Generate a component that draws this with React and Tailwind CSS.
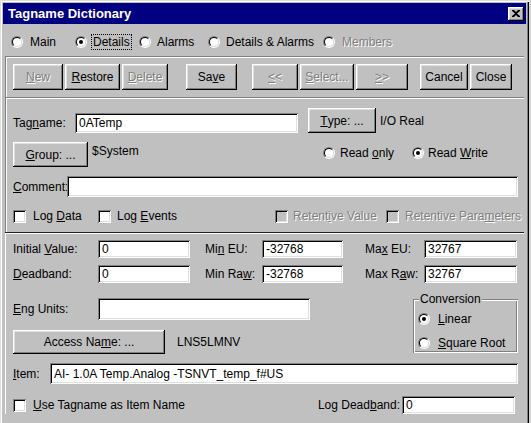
import React from "react";

const raised = "shadow-[inset_-1px_-1px_#000,inset_1px_1px_#fff,inset_-2px_-2px_#808080,inset_2px_2px_#dfdfdf]";
const sunken = "shadow-[inset_1px_1px_#808080,inset_-1px_-1px_#fff,inset_2px_2px_#000,inset_-2px_-2px_#dfdfdf]";
const dim = "text-[#808080] [text-shadow:1px_1px_0_#fff]";

function Button({ children, className = "", disabled }) {
    return (
        <div className={`flex items-center justify-center bg-[#c0c0c0] ${raised} ${disabled ? dim : "text-black"} ${className}`}>
            {children}
        </div>
    );
}

function Field({ children, className = "" }) {
    return (
        <div className={`flex items-center bg-white pl-[4px] ${sunken} ${className}`}>
            {children}
        </div>
    );
}

function Radio({ checked }) {
    return (
        <span className="inline-block w-[12px] h-[12px] shrink-0 rounded-full border border-t-[#808080] border-l-[#808080] border-b-white border-r-white">
            <span className="flex w-full h-full items-center justify-center rounded-full border border-t-black border-l-black border-b-[#dfdfdf] border-r-[#dfdfdf] bg-white">
                {checked && <span className="w-[4px] h-[4px] rounded-full bg-black" />}
            </span>
        </span>
    );
}

function Check({ disabled }) {
    return (
        <span className={`inline-block w-[13px] h-[13px] shrink-0 ${sunken} ${disabled ? "bg-[#c0c0c0]" : "bg-white"}`} />
    );
}

export default function App() {
    return (
        <div className="w-[531px] h-[423px] overflow-hidden bg-[#d4d4d4] font-['Liberation_Sans',Arial,sans-serif] text-[12px] leading-[14px] text-black">
            <div className="w-[529px] h-full bg-[#c0c0c0] pl-[3px] pt-[3px] pr-[3px] shadow-[inset_1px_1px_#dfdfdf,inset_2px_2px_#fff,inset_-1px_0_#000,inset_-2px_0_#808080]">
                {/* title bar */}
                <div className="h-[21px] bg-[#000080] flex items-center pl-[5px] pr-[2px] text-white font-bold text-[13px]">
                    <span>Tagname Dictionary</span>
                    <div className={`ml-auto w-[16px] h-[14px] bg-[#c0c0c0] flex items-center justify-center ${raised}`}>
                        <svg width="8" height="7" viewBox="0 0 8 7">
                            <path d="M0 0h2l2 2 2-2h2v1L5 3.5 8 6v1H6L4 5 2 7H0V6l3-2.5L0 1z" fill="#000" />
                        </svg>
                    </div>
                </div>

                {/* view radios */}
                <div className="h-[32px] flex items-center pl-[8px] pt-[3px]">
                    <div className="w-[64px] flex items-center"><Radio /><span className="ml-[7px]">Main</span></div>
                    <div className="w-[64px] flex items-center">
                        <Radio checked />
                        <span className="ml-[4px] px-[1px] border border-dotted border-black">Details</span>
                    </div>
                    <div className="w-[69px] flex items-center"><Radio /><span className="ml-[6px]">Alarms</span></div>
                    <div className="w-[115px] flex items-center"><Radio /><span className="ml-[6px]">Details &amp; Alarms</span></div>
                    <div className="flex items-center"><Radio /><span className={`ml-[7px] ${dim}`}>Members</span></div>
                </div>

                {/* toolbar */}
                <div className="mx-[2px] h-[41px] pt-[8px] pl-[8px] shadow-[inset_1px_1px_#808080,inset_2px_2px_#fff]">
                    <div className="flex">
                        <Button disabled className="w-[50px] h-[26px]"><u>N</u>ew</Button>
                        <Button className="w-[55px] h-[26px] ml-[2px]"><u>R</u>estore</Button>
                        <Button disabled className="w-[46px] h-[26px] ml-[2px]"><u>D</u>elete</Button>
                        <Button className="w-[51px] h-[26px] ml-[18px]">Sa<u>v</u>e</Button>
                        <Button disabled className="w-[46px] h-[26px] ml-[15px]"><u>&lt;</u>&lt;</Button>
                        <Button disabled className="w-[54px] h-[26px] ml-[2px]"><u>S</u>elect...</Button>
                        <Button disabled className="w-[52px] h-[26px] ml-[2px]"><u>&gt;</u>&gt;</Button>
                        <Button className="w-[48px] h-[26px] ml-[12px]">Cancel</Button>
                        <Button className="w-[42px] h-[26px] ml-[2px]">Close</Button>
                    </div>
                </div>

                {/* tag section */}
                <div className="mx-[2px] h-[135px] pt-[11px] pl-[8px] shadow-[inset_1px_1px_#808080,inset_2px_2px_#fff]">
                    <div className="flex items-end h-[25px]">
                        <span className="w-[62px] mb-[3px]">Tag<u>n</u>ame:</span>
                        <Field className="w-[223px] h-[20px]">0ATemp</Field>
                        <Button className="w-[68px] h-[25px] ml-[10px]"><u>T</u>ype: ...</Button>
                        <span className="ml-[4px] self-center">I/O Real</span>
                    </div>
                    <div className="flex mt-[9px] h-[25px]">
                        <Button className="w-[75px] h-[25px]"><u>G</u>roup: ...</Button>
                        <span className="w-[231px] ml-[4px] mt-[2px]">$System</span>
                        <div className="flex items-center mt-[5px] h-[12px]">
                            <div className="w-[89px] flex items-center"><Radio /><span className="ml-[5px]">Read <u>o</u>nly</span></div>
                            <div className="flex items-center"><Radio checked /><span className="ml-[4px]">Read <u>W</u>rite</span></div>
                        </div>
                    </div>
                    <div className="flex items-center mt-[9px]">
                        <span className="w-[54px]"><u>C</u>omment:</span>
                        <Field className="w-[451px] h-[21px]" />
                    </div>
                    <div className="flex items-center mt-[12px]">
                        <div className="w-[85px] flex items-center"><Check /><span className="ml-[7px]">Log <u>D</u>ata</span></div>
                        <div className="w-[177px] flex items-center"><Check /><span className="ml-[6px]">Log <u>E</u>vents</span></div>
                        <div className="w-[111px] flex items-center"><Check disabled /><span className={`ml-[5px] ${dim}`}>Retent<u>i</u>ve Value</span></div>
                        <div className="flex items-center"><Check disabled /><span className={`ml-[6px] ${dim}`}>Retentive Para<u>m</u>eters</span></div>
                    </div>
                </div>

                {/* separator */}
                <div className="mx-[2px] h-[2px] bg-[#202020] border-b border-white" />

                {/* io section */}
                <div className="mx-[2px] pt-[6px] pl-[8px] shadow-[inset_1px_0_#fff]">
                    <div className="flex items-center h-[18px]">
                        <span className="w-[85px]">Initial <u>V</u>alue:</span>
                        <Field className="w-[92px] h-[18px]">0</Field>
                        <span className="w-[57px] ml-[15px]">Mi<u>n</u> EU:</span>
                        <Field className="w-[81px] h-[18px]">-32768</Field>
                        <span className="w-[59px] ml-[22px]">Ma<u>x</u> EU:</span>
                        <Field className="w-[93px] h-[18px]">32767</Field>
                    </div>
                    <div className="flex items-center h-[18px] mt-[7px]">
                        <span className="w-[85px]"><u>D</u>eadband:</span>
                        <Field className="w-[92px] h-[18px]">0</Field>
                        <span className="w-[57px] ml-[15px]">Min Ra<u>w</u>:</span>
                        <Field className="w-[81px] h-[18px]">-32768</Field>
                        <span className="w-[59px] ml-[22px]">Max R<u>a</u>w:</span>
                        <Field className="w-[93px] h-[18px]">32767</Field>
                    </div>
                    <div className="flex items-start justify-between mt-[12px] pr-[6px]">
                        <div className="mt-[3px]">
                            <div className="flex items-center h-[22px]">
                                <span className="w-[85px]"><u>E</u>ng Units:</span>
                                <Field className="w-[212px] h-[22px]" />
                            </div>
                            <div className="flex items-center mt-[10px]">
                                <Button className="w-[152px] h-[24px]">Access Na<u>m</u>e: ...</Button>
                                <span className="ml-[12px]">LNS5LMNV</span>
                            </div>
                        </div>
                        <div className="relative mt-[4px] w-[105px] h-[54px] pt-[13px] pl-[5px] shadow-[inset_1px_1px_#808080,inset_2px_2px_#fff,inset_-1px_-1px_#fff,inset_-2px_-2px_#808080]">
                            <span className="absolute left-[6px] top-[-7px] px-[1px] bg-[#c0c0c0]">Conversion</span>
                            <div className="flex items-center"><Radio checked /><span className="ml-[8px]"><u>L</u>inear</span></div>
                            <div className="flex items-center mt-[10px]"><Radio /><span className="ml-[8px]"><u>S</u>quare Root</span></div>
                        </div>
                    </div>
                    <div className="flex items-center mt-[9px]">
                        <span className="w-[37px]"><u>I</u>tem:</span>
                        <Field className="w-[468px] h-[21px]">AI- 1.0A Temp.Analog -TSNVT_temp_f#US</Field>
                    </div>
                    <div className="flex items-center h-[18px] mt-[12px] pr-[9px]">
                        <Check />
                        <span className="ml-[7px]"><u>U</u>se Tagname as Item Name</span>
                        <span className="ml-auto mr-[2px]">Log Dead<u>b</u>and:</span>
                        <Field className="w-[113px] h-[18px]">0</Field>
                    </div>
                </div>
            </div>
        </div>
    );
}
